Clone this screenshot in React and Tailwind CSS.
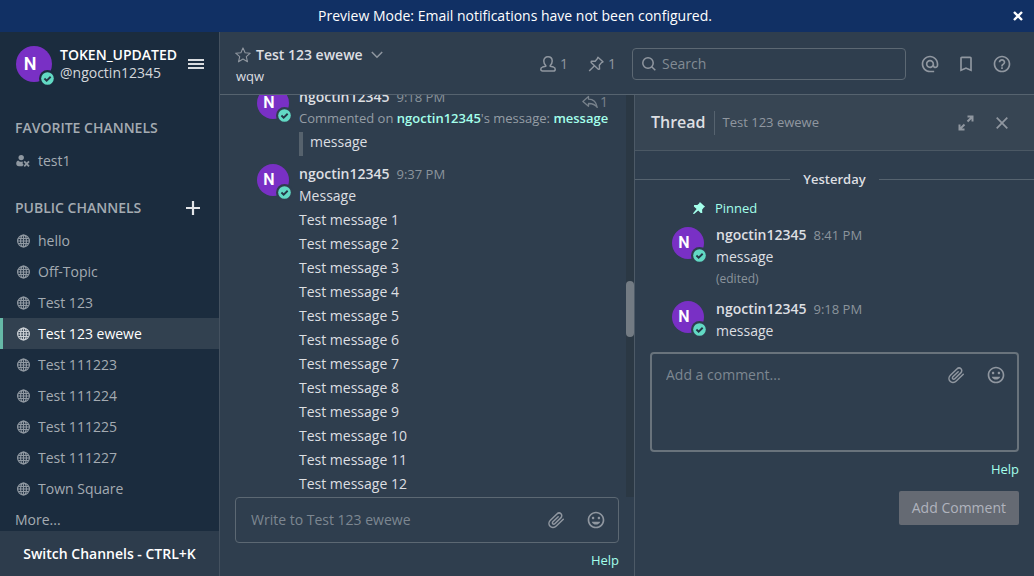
import React from "react";
import {
  MdAlternateEmail,
  MdBookmarkBorder,
  MdHelpOutline,
  MdInsertEmoticon,
} from "react-icons/md";

const channels = [
  "hello",
  "Off-Topic",
  "Test 123",
  "Test 123 ewewe",
  "Test 111223",
  "Test 111224",
  "Test 111225",
  "Test 111227",
  "Town Square",
];

const lines = Array.from({ length: 12 }, (_, i) => `Test message ${i + 1}`);

function GlobeIcon() {
  return (
    <svg viewBox="0 0 14 14" className="size-[14px] shrink-0" fill="none" stroke="currentColor" strokeWidth="1.2" aria-hidden="true">
      <circle cx="7.500" cy="7" r="5.900" />
      <ellipse cx="7.500" cy="7" rx="2.900" ry="5.900" />
      <path d="M7.500 1v12M2.200 4.500h10.600M2.200 9.500h10.600M1.500 7h12" />
    </svg>
  );
}

function PeopleIcon() {
  return (
    <svg viewBox="0 0 14 14" className="size-[14px] shrink-0" fill="currentColor" aria-hidden="true">
      <circle cx="5.200" cy="3.600" r="2.700" />
      <path d="M.2 9.200C.4 7.600 1.500 6.600 2.200 6.600c1 1.400 3.600 1.600 4.800.8L6.600 9.400l1 1.100-1.200 1.800H3C1.300 12.300.1 11 .2 9.200z" />
      <path d="M8.200 7.400l4.800 5M13 7.400l-4.800 5" stroke="currentColor" strokeWidth="1.800" />
    </svg>
  );
}

function PaperclipIcon() {
  return (
    <svg viewBox="0 0 20 20" className="size-5" fill="none" stroke="currentColor" strokeWidth="1.500" strokeLinecap="round" strokeLinejoin="round" aria-hidden="true">
      <path d="M17.300 9.300l-7 6.700c-1.900 1.800-4.600 1.900-6.200.3-1.600-1.600-1.500-4.200.3-6l6.500-6.300c1.200-1.200 3-1.300 4.100-.2s1 2.900-.2 4.100l-6 5.800c-.6.6-1.500.7-2 .1-.6-.5-.5-1.400.1-2l5.300-5.100" />
    </svg>
  );
}

function PinOutlineIcon() {
  return (
    <svg viewBox="0 0 16 16" className="size-4" fill="none" stroke="currentColor" strokeWidth="1.400" strokeLinejoin="round" aria-hidden="true">
      <path d="M9.900 1.200l5.100 4.600-1.500.8-2.200 2.600.3 3.800-1.300.2L3.100 6.400l.2-1.300 3.900.2L9.300 2.700z" />
      <path d="M6.500 9.800L1.200 15" />
    </svg>
  );
}

function PinSolidIcon() {
  return (
    <svg viewBox="0 0 14 14" className="size-[14px]" fill="currentColor" aria-hidden="true">
      <path d="M7.900 1.100l5.200 4.600-1.300.9-1.700 2.200.2 3.100-1.600.1-2.500-2.500-4.100 3.600-.9-.1.100-.9L4.600 8 1.900 5.400l.2-1.500 3.200.1L7.100 2.400z" />
    </svg>
  );
}

function MemberIcon() {
  return (
    <svg viewBox="0 0 16 16" className="size-4" fill="none" stroke="currentColor" strokeWidth="1.500" strokeLinejoin="round" aria-hidden="true">
      <path d="M8 .8c2.600 0 4.200 1.700 4.200 4.300 0 1.900-.8 3.500-2 4.400v.8l3.300.8c1.100.3 1.700 1 1.700 2.100s-.7 1.900-1.700 1.900h-11c-1 0-1.700-.8-1.700-1.900s.6-1.800 1.700-2.100l3.300-.8v-.8c-1.200-.9-2-2.500-2-4.400C3.800 2.500 5.400.8 8 .8z" />
    </svg>
  );
}

function ReplyIcon() {
  return (
    <svg viewBox="0 0 16 14" className="h-[14px] w-4" fill="none" stroke="currentColor" strokeWidth="1.300" strokeLinejoin="round" aria-hidden="true">
      <path d="M6.500 1.500v2.700c4.800.1 7.900 2.900 8.700 8.200-2-2.800-4.800-4-8.700-3.900v2.800L.9 6.400z" />
    </svg>
  );
}

function StatusBadge({ ring }) {
  return (
    <span className={`absolute -right-1 -bottom-[5px] flex rounded-full p-[2px] ${ring}`}>
      <svg viewBox="0 0 14 14" className="size-[13px]" aria-hidden="true">
        <circle cx="7" cy="7" r="6.800" fill="#62d9c4" />
        <path d="M3.700 7l2.400 2.400 4.300-4.300" fill="none" stroke="#243646" strokeWidth="2" />
      </svg>
    </span>
  );
}

function Avatar({ size = "size-8", ring = "bg-[#2f3e4e]", text = "text-base" }) {
  return (
    <div className={`relative flex shrink-0 items-center justify-center rounded-full bg-[#7930c5] pr-2 font-['Roboto',sans-serif] font-semibold text-white ${size} ${text}`}>
      N
      <StatusBadge ring={ring} />
    </div>
  );
}

function PostName({ time, children }) {
  return (
    <div className="flex h-5 items-center">
      <button className="font-semibold">ngoctin12345</button>
      <time className="ml-[7px] text-[13px] text-[#8b949c]">{time}</time>
      {children}
    </div>
  );
}

function ComposerIcons() {
  return (
    <div className="flex gap-5 text-[#9097a0]">
      <button type="button" aria-label="Attach file"><PaperclipIcon /></button>
      <button type="button" aria-label="Emoji picker"><MdInsertEmoticon size={20} /></button>
    </div>
  );
}

function Sidebar() {
  return (
    <aside className="flex w-[220px] shrink-0 flex-col border-r border-[#44515f] bg-[#1b2c3e]">
      <header className="flex h-16 shrink-0 items-center pr-[15px] pb-px pl-4">
        <Avatar size="size-9" ring="bg-[#1b2c3e]" text="text-lg" />
        <div className="ml-2 flex-1 pt-px leading-[18px]">
          <div className="font-semibold text-white">TOKEN_UPDATED</div>
          <div className="text-[#d5d8dc]">@ngoctin12345</div>
        </div>
        <button aria-label="Main menu" className="flex w-4 flex-col gap-[2px] text-[#d9dcdf]">
          <span className="h-[2px] w-full bg-current" />
          <span className="h-[2px] w-full bg-current" />
          <span className="h-[2px] w-full bg-current" />
        </button>
      </header>
      <nav className="min-h-0 flex-1 overflow-hidden text-[#a4abb2]">
        <h2 className="px-[15px] pt-[22px] pb-[7px] leading-5 font-semibold">FAVORITE CHANNELS</h2>
        <a href="#test1" className="flex h-[31px] items-center gap-2 px-4">
          <span className="text-[#8f98a1]"><PeopleIcon /></span>
          test1
        </a>
        <div className="flex items-center justify-between pt-[22px] pr-[19px] pb-[7px] pl-[15px]">
          <h2 className="leading-5 font-semibold">PUBLIC CHANNELS</h2>
          <button aria-label="Add channel" className="text-[#e3e5e8]">
            <svg viewBox="0 0 14 14" className="size-[14px]" stroke="currentColor" strokeWidth="2.200" aria-hidden="true">
              <path d="M7 0v14M0 7h14" />
            </svg>
          </button>
        </div>
        {channels.map((name) => {
          const active = name === "Test 123 ewewe";
          return (
            <a
              key={name}
              href="#channel"
              className={
                active
                  ? "flex h-[31px] items-center gap-2 border-l-[3px] border-[#66b9a7] bg-[#324150] pl-[13px] text-white"
                  : "flex h-[31px] items-center gap-2 pl-4"
              }
            >
              <span className={active ? "text-[#c9ced3]" : "text-[#8f98a1]"}><GlobeIcon /></span>
              {name}
            </a>
          );
        })}
        <button className="flex h-[31px] items-center px-[15px]">More...</button>
      </nav>
      <button className="h-[45px] shrink-0 bg-[#2d3c4c] font-semibold text-white">Switch Channels - CTRL+K</button>
    </aside>
  );
}

function ChannelHeader() {
  return (
    <header className="flex h-[63px] shrink-0 items-center border-b border-[#56636f] pt-[2px] pr-[22px] pl-[15px] text-[#9097a0]">
      <div className="flex-1 self-start pt-[11px]">
        <div className="flex h-5 items-center">
          <button aria-label="Favorite" className="mr-[5px]">
            <svg viewBox="0 0 16 16" className="size-4" fill="none" stroke="currentColor" strokeWidth="1.100" strokeLinejoin="round" aria-hidden="true">
              <path d="M8 .9l2.100 4.900 5.200.4-4 3.500 1.200 5.100L8 12l-4.500 2.800 1.200-5.100-4-3.500 5.200-.4z" />
            </svg>
          </button>
          <button className="flex items-center gap-2">
            <strong className="font-semibold text-[#dddfe2]">Test 123 ewewe</strong>
            <svg viewBox="0 0 12 8" className="h-2 w-3" fill="none" stroke="currentColor" strokeWidth="1.500" aria-hidden="true">
              <path d="M.8 1l5.200 5.200L11.200 1" />
            </svg>
          </button>
        </div>
        <p className="pl-px text-[13px] leading-[22px] text-[#dddfe2]">wqw</p>
      </div>
      <button className="flex items-center gap-1" aria-label="1 member"><MemberIcon />1</button>
      <button className="ml-5 flex items-center gap-1" aria-label="1 pinned post"><PinOutlineIcon />1</button>
      <label className="ml-4 flex h-8 w-[274px] items-center gap-[6px] rounded border border-[#5c6873] px-[9px]">
        <svg viewBox="0 0 14 14" className="size-[14px] shrink-0" fill="none" stroke="currentColor" strokeWidth="1.500" aria-hidden="true">
          <circle cx="6" cy="6" r="5.200" />
          <path d="M9.700 9.700l3.600 3.600" />
        </svg>
        <input type="text" aria-label="Search" placeholder="Search" className="min-w-0 flex-1 bg-transparent outline-none placeholder:text-[#828b94]" />
      </label>
      <div className="ml-[14px] flex gap-4">
        <button aria-label="Recent mentions"><MdAlternateEmail size={20} /></button>
        <button aria-label="Saved posts"><MdBookmarkBorder size={20} /></button>
        <button aria-label="Help"><MdHelpOutline size={20} /></button>
      </div>
    </header>
  );
}

function Center() {
  return (
    <main className="flex min-w-0 flex-1 flex-col">
      <div className="flex min-h-0 flex-1">
        <div className="flex min-w-0 flex-1 flex-col justify-end gap-2 overflow-hidden pr-[18px] pb-px pl-[37px]">
          <article className="flex gap-[10px]">
            <Avatar />
            <div className="min-w-0 flex-1">
              <PostName time="9:18 PM">
                <button aria-label="1 reply" className="mt-[10px] ml-auto flex items-center gap-[2px] text-[#77818b]">
                  <ReplyIcon />1
                </button>
              </PostName>
              <p className="text-[13px] leading-[22px] whitespace-nowrap text-[#959da5]">
                Commented on <a href="#user" className="font-semibold text-[#a4ffeb]">ngoctin12345</a>'s message:{" "}
                <a href="#message" className="font-semibold text-[#a4ffeb]">message</a>
              </p>
              <p className="mt-[3px] border-l-4 border-[#56626d] pb-1 pl-[7px] leading-5">message</p>
            </div>
          </article>
          <article className="flex gap-[10px]">
            <Avatar />
            <div>
              <PostName time="9:37 PM" />
              <p className="leading-6">Message</p>
              {lines.map((l) => (
                <p key={l} className="leading-6">{l}</p>
              ))}
            </div>
          </article>
        </div>
        <div className="w-2 shrink-0 bg-[#2b3844] pt-[186px]">
          <div className="h-14 rounded bg-[#737b83]" />
        </div>
      </div>
      <form className="px-[15px] pb-[5px]">
        <div className="flex h-[46px] items-center rounded border border-[#5c6873] pr-3 pl-[15px]">
          <input type="text" aria-label="Write to Test 123 ewewe" placeholder="Write to Test 123 ewewe" className="min-w-0 flex-1 bg-transparent outline-none placeholder:text-[#7d8791]" />
          <ComposerIcons />
        </div>
        <div className="mt-[7px] text-right text-[13px] leading-[21px]">
          <a href="#help" className="text-[#a4ffeb]">Help</a>
        </div>
      </form>
    </main>
  );
}

function Thread() {
  return (
    <section className="w-[400px] shrink-0 overflow-hidden border-l border-[#4d5a67]">
      <header className="flex h-14 items-center border-b border-[#4b5864] bg-[#374553] pr-[22px] pl-4 text-[#9097a0]">
        <h2 className="pb-px text-base font-semibold text-[#dddfe2]">Thread</h2>
        <span className="ml-2 flex h-6 flex-1 items-center border-l border-[#56636f] pl-2 text-[13px]">Test 123 ewewe</span>
        <button aria-label="Expand" className="mr-4 flex size-5 items-center justify-center">
          <svg viewBox="0 0 16 16" className="size-4" fill="none" stroke="currentColor" strokeWidth="2" aria-hidden="true">
            <path d="M9.500 1.500h5v5M14.300 1.700L9.500 6.500M6.500 14.500h-5v-5M1.700 14.300l4.800-4.800" />
          </svg>
        </button>
        <button aria-label="Close" className="flex size-5 items-center justify-center">
          <svg viewBox="0 0 12 12" className="size-3" stroke="currentColor" strokeWidth="1.700" aria-hidden="true">
            <path d="M.7.700l10.600 10.600M11.300.700L.7 11.300" />
          </svg>
        </button>
      </header>
      <div className="flex items-center gap-[13px] pt-[18px] text-[13px] leading-5 font-semibold">
        <hr className="flex-1 border-[#56636f]" />
        Yesterday
        <hr className="flex-1 border-[#56636f]" />
      </div>
      <div className="mt-[9px] flex items-center gap-[9px] pl-[57px] text-[13px] leading-5 text-[#a4ffeb]">
        <PinSolidIcon />
        Pinned
      </div>
      <article className="mt-[7px] flex gap-3 pl-[37px]">
        <div className="pt-[2px]"><Avatar /></div>
        <div>
          <PostName time="8:41 PM" />
          <p className="leading-6">message</p>
          <p className="text-xs leading-5 text-[#8b949c]">(edited)</p>
        </div>
      </article>
      <article className="mt-[10px] flex gap-3 pl-[37px]">
        <div className="pt-[2px]"><Avatar /></div>
        <div>
          <PostName time="9:18 PM" />
          <p className="leading-6">message</p>
        </div>
      </article>
      <form className="px-[15px] pt-[9px]">
        <div className="flex h-[100px] items-start rounded border-2 border-[#69737c] pt-[11px] pr-[11px] pl-[14px]">
          <textarea aria-label="Add a comment" placeholder="Add a comment..." className="h-20 min-w-0 flex-1 resize-none bg-transparent leading-5 outline-none placeholder:text-[#7d8791]" />
          <ComposerIcons />
        </div>
        <div className="mt-[7px] text-right text-[13px] leading-5">
          <a href="#help" className="text-[#a4ffeb]">Help</a>
        </div>
        <button type="button" className="mt-3 ml-auto block h-[34px] rounded-[2px] bg-[#656a73] px-[13px] text-[#b0b3bd]">Add Comment</button>
      </form>
    </section>
  );
}

export default function App() {
  return (
    <div className="flex h-screen flex-col overflow-hidden bg-[#2f3e4e] font-['Open_Sans',sans-serif] text-sm text-[#dddfe2]">
      <div className="flex h-8 shrink-0 items-center bg-[#113064] pr-[10px] pl-[18px] text-white">
        <p className="flex-1 pb-px text-center">Preview Mode: Email notifications have not been configured.</p>
        <button aria-label="Dismiss" className="flex size-3 items-center justify-center">
          <svg viewBox="0 0 10 10" className="size-[10px]" stroke="currentColor" strokeWidth="2.400" aria-hidden="true">
            <path d="M1 1l8 8M9 1L1 9" />
          </svg>
        </button>
      </div>
      <div className="flex min-h-0 flex-1">
        <Sidebar />
        <div className="flex min-w-0 flex-1 flex-col">
          <ChannelHeader />
          <div className="flex min-h-0 flex-1">
            <Center />
            <Thread />
          </div>
        </div>
      </div>
    </div>
  );
}
